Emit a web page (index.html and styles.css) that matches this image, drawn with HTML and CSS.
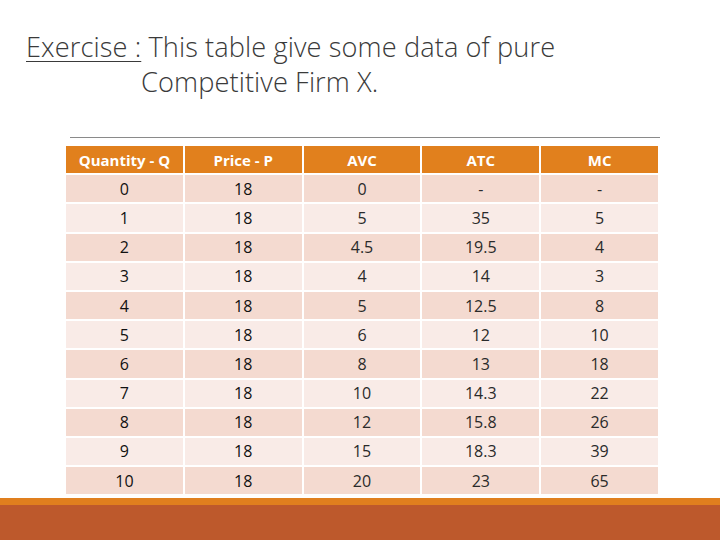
FILE: index.html
```html
<!DOCTYPE html>
<html>
<head>
<meta charset="utf-8">
<link rel="stylesheet" href="styles.css">
</head>
<body>
<div class="slide">
  <div class="title"><span class="u">Exercise :</span> This table give some data of pure<br><span class="ind"></span>Competitive Firm X.</div>
  <div class="rule"></div>
  <div class="table">
    <div class="c h">Quantity - Q</div><div class="c h">Price - P</div><div class="c h">AVC</div><div class="c h">ATC</div><div class="c h">MC</div>
    <div class="c d b">0</div><div class="c d b">18</div><div class="c d">0</div><div class="c d">-</div><div class="c d">-</div>
    <div class="c l b">1</div><div class="c l b">18</div><div class="c l">5</div><div class="c l">35</div><div class="c l">5</div>
    <div class="c d b">2</div><div class="c d b">18</div><div class="c d">4.5</div><div class="c d">19.5</div><div class="c d">4</div>
    <div class="c l b">3</div><div class="c l b">18</div><div class="c l">4</div><div class="c l">14</div><div class="c l">3</div>
    <div class="c d b">4</div><div class="c d b">18</div><div class="c d">5</div><div class="c d">12.5</div><div class="c d">8</div>
    <div class="c l b">5</div><div class="c l b">18</div><div class="c l">6</div><div class="c l">12</div><div class="c l">10</div>
    <div class="c d b">6</div><div class="c d b">18</div><div class="c d">8</div><div class="c d">13</div><div class="c d">18</div>
    <div class="c l b">7</div><div class="c l b">18</div><div class="c l">10</div><div class="c l">14.3</div><div class="c l">22</div>
    <div class="c d b">8</div><div class="c d b">18</div><div class="c d">12</div><div class="c d">15.8</div><div class="c d">26</div>
    <div class="c l b">9</div><div class="c l b">18</div><div class="c l">15</div><div class="c l">18.3</div><div class="c l">39</div>
    <div class="c d b">10</div><div class="c d b">18</div><div class="c d">20</div><div class="c d">23</div><div class="c d">65</div>
  </div>
  <div class="footer">
    <div class="stripe"></div>
    <div class="band"></div>
  </div>
</div>
</body>
</html>
```
FILE: styles.css
```css
html, body {
  margin: 0;
  padding: 0;
  background: #fff;
}
.slide {
  width: 720px;
  height: 540px;
  display: flex;
  flex-direction: column;
  font-family: "Open Sans", Lato, sans-serif;
}
.title {
  padding: 29px 0 0 26px;
  font-weight: 300;
  font-size: 27.2px;
  line-height: 35px;
  letter-spacing: 0.1px;
  color: #3a3a3a;
  white-space: nowrap;
}
.ind {
  display: inline-block;
  width: 115px;
}
.u {
  text-decoration: underline;
  text-decoration-thickness: 1px;
  text-underline-offset: 4px;
}
.rule {
  margin: 38px 0 0 70px;
  width: 590px;
  height: 1px;
  background: #8a8a8a;
}
.table {
  margin: 8px 0 0 66px;
  width: 592px;
  display: grid;
  grid-template-columns: repeat(5, 1fr);
  grid-auto-rows: 27.2px;
  gap: 2px;
}
.c {
  display: flex;
  align-items: center;
  justify-content: center;
  font-size: 16px;
  color: #2a2a2a;
}
.h {
  background: #E1801D;
  color: #fff;
  font-weight: 700;
  font-size: 15px;
}
.d {
  background: #F4DAD0;
}
.l {
  background: #F9EBE7;
}
.b {
  color: #111;
}
.footer {
  margin-top: auto;
  display: flex;
  flex-direction: column;
}
.stripe {
  height: 7px;
  background: #E07F1E;
}
.band {
  height: 35px;
  background: #BD592C;
}
```
